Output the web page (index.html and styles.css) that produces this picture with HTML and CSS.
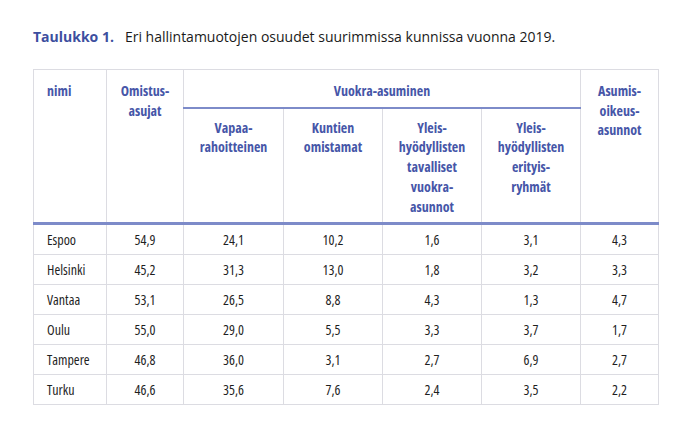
FILE: index.html
```html
<!DOCTYPE html>
<html lang="fi">
<head>
<meta charset="utf-8">
<link rel="stylesheet" href="styles.css">
</head>
<body>
<div class="page">
  <p class="caption"><span class="label">Taulukko 1.</span><span class="text">Eri hallintamuotojen osuudet suurimmissa kunnissa vuonna 2019.</span></p>
  <table class="data">
    <colgroup>
      <col class="c1"><col class="c2"><col class="c3"><col class="c4"><col class="c5"><col class="c6"><col class="c7">
    </colgroup>
    <thead>
      <tr>
        <th rowspan="2" class="left">nimi</th>
        <th rowspan="2">Omistus-<br>asujat</th>
        <th colspan="4" class="group">Vuokra-asuminen</th>
        <th rowspan="2">Asumis-<br>oikeus-<br>asunnot</th>
      </tr>
      <tr class="sub">
        <th>Vapaa-<br>rahoitteinen</th>
        <th>Kuntien<br>omistamat</th>
        <th>Yleis-<br>hyödyllisten<br>tavalliset<br>vuokra-<br>asunnot</th>
        <th>Yleis-<br>hyödyllisten<br>erityis-<br>ryhmät</th>
      </tr>
    </thead>
    <tbody>
      <tr><td class="left">Espoo</td><td>54,9</td><td>24,1</td><td>10,2</td><td>1,6</td><td>3,1</td><td>4,3</td></tr>
      <tr><td class="left">Helsinki</td><td>45,2</td><td>31,3</td><td>13,0</td><td>1,8</td><td>3,2</td><td>3,3</td></tr>
      <tr><td class="left">Vantaa</td><td>53,1</td><td>26,5</td><td>8,8</td><td>4,3</td><td>1,3</td><td>4,7</td></tr>
      <tr><td class="left">Oulu</td><td>55,0</td><td>29,0</td><td>5,5</td><td>3,3</td><td>3,7</td><td>1,7</td></tr>
      <tr><td class="left">Tampere</td><td>46,8</td><td>36,0</td><td>3,1</td><td>2,7</td><td>6,9</td><td>2,7</td></tr>
      <tr><td class="left">Turku</td><td>46,6</td><td>35,6</td><td>7,6</td><td>2,4</td><td>3,5</td><td>2,2</td></tr>
    </tbody>
  </table>
</div>
</body>
</html>
```

FILE: styles.css
```css
html, body {
  margin: 0;
  padding: 0;
  background: #ffffff;
}
.page {
  padding: 27px 0 0 33px;
}
.caption {
  margin: 0 0 22px 0;
  font-family: "Open Sans", "Noto Sans", sans-serif;
  font-size: 14px;
  line-height: 20px;
  color: #1a1a1a;
}
.caption .label {
  font-weight: bold;
  color: #3d4f9f;
  margin-right: 11px;
}
.data {
  border-collapse: collapse;
  width: 625px;
  table-layout: fixed;
  font-family: "Open Sans", "DejaVu Sans Condensed", sans-serif;
  font-stretch: 75%;
  font-size: 14px;
  border: 1.5px solid #dcdce2;
}
.c1 { width: 73px; }
.c2 { width: 77px; }
.c3 { width: 100px; }
.c4 { width: 99px; }
.c5 { width: 99px; }
.c6 { width: 99px; }
.c7 { width: 78px; }
.data th {
  color: #4656a8;
  font-weight: bold;
  line-height: 19.7px;
  vertical-align: top;
  text-align: center;
  padding: 11px 4px 6px;
  border-left: 1.5px solid #dcdce2;
  border-right: 1.5px solid #dcdce2;
  border-bottom: 3px solid #7d8bc9;
}
.data th.group {
  padding: 11px 4px 6px;
  border-bottom: 2.5px solid #7d8bc9;
}
.data tr.sub th {
  padding: 9px 4px 6px;
}
.data .left {
  text-align: left;
  padding-left: 13px;
}
.data td {
  color: #1f1f1f;
  height: 29px;
  padding: 0 4px;
  text-align: center;
  vertical-align: middle;
  border: 1.5px solid #dcdce2;
  line-height: 18px;
}
.data td.left {
  padding-left: 13px;
}
```
